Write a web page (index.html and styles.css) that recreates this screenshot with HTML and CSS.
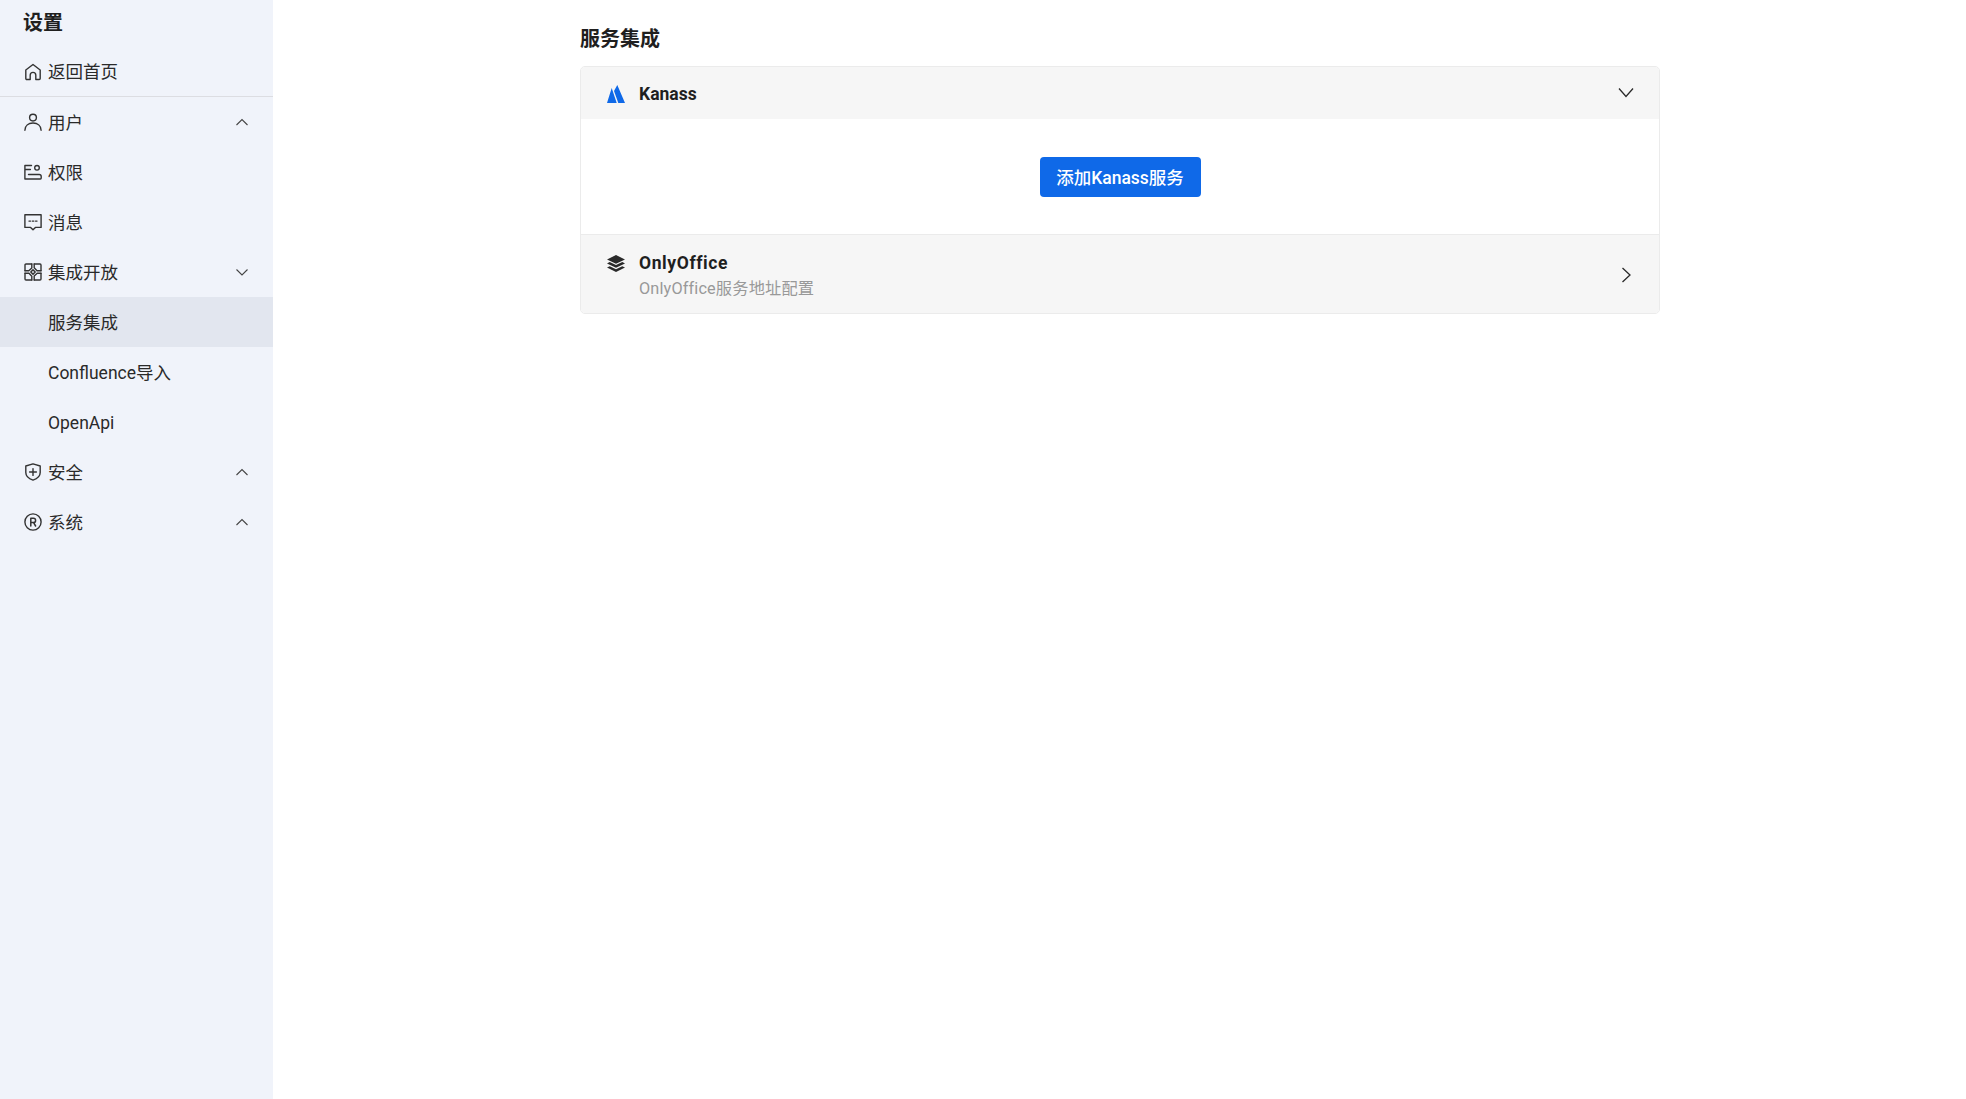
FILE: index.html
```html
<!DOCTYPE html>
<html lang="zh">
<head>
<meta charset="utf-8">
<title>服务集成</title>
<link rel="stylesheet" href="styles.css">
</head>
<body>
<div class="app">
  <aside class="sidebar">
    <div class="side-title">设置</div>
    <div class="home-wrap">
      <div class="row">
        <svg class="ico" viewBox="0 0 18 18"><path d="M1.800 7 9 1.500 16.200 7v8.500a1 1 0 0 1-1 1h-3.400v-4.300a2.800 2.800 0 0 0-5.600 0v4.300H2.800a1 1 0 0 1-1-1Z"/></svg>
        <span>返回首页</span>
      </div>
    </div>
    <div class="row">
      <svg class="ico" viewBox="0 0 18 18"><circle cx="9" cy="4.600" r="3.400"/><path d="M.9 17.200c0-4.500 3.500-7.200 8.100-7.200s8.100 2.700 8.100 7.200"/></svg>
      <span class="grow">用户</span>
      <svg class="chev" viewBox="0 0 12 12"><path d="M.5 9 6 3.500 11.500 9"/></svg>
    </div>
    <div class="row">
      <svg class="ico" viewBox="0 0 18 18"><path d="M7.500 2.500H.9v13.500h15.400a1 1 0 0 0 .9-1v-1.500a2 2 0 0 0-2-2H4.500M.9 6.500h5.500"/><circle cx="13" cy="4.800" r="2.300"/></svg>
      <span>权限</span>
    </div>
    <div class="row">
      <svg class="ico" viewBox="0 0 18 18"><path d="M.9 1.800h16.200v12.600h-5.700L9 16.800l-2.400-2.400H.9Z"/><path class="dots" d="M5 8.100h1.500M8.300 8.100h1.500M11.500 8.100h1.500"/></svg>
      <span>消息</span>
    </div>
    <div class="row">
      <svg class="ico" viewBox="0 0 18 18"><path d="M7.800 1H2a1 1 0 0 0-1 1v5.800M10.200 1H16a1 1 0 0 1 1 1v5.800M7.800 17H2a1 1 0 0 1-1-1v-5.800M10.200 17H16a1 1 0 0 0 1-1v-5.800"/><path d="M1 7.800h3.800L7.800 5V1M10.200 1v3.800L13 7.800h4M17 10.200h-3.800L10.200 13v4M7.800 17v-3.800L5 10.200H1"/><path class="thick" d="M9 6.800 11.200 9 9 11.200 6.800 9Z"/></svg>
      <span class="grow">集成开放</span>
      <svg class="chev" viewBox="0 0 12 12"><path d="M.5 3.500 6 9l5.500-5.500"/></svg>
    </div>
    <div class="row active"><span class="sub">服务集成</span></div>
    <div class="row"><span class="sub">Confluence导入</span></div>
    <div class="row"><span class="sub">OpenApi</span></div>
    <div class="row">
      <svg class="ico" viewBox="0 0 18 18"><path d="M9 .9 16.200 3v6.500c0 3.600-3 6.200-7.200 7.600-4.200-1.400-7.200-4-7.200-7.600V3Z"/><path d="M9 5.600v6.800M5.600 9h6.800"/></svg>
      <span class="grow">安全</span>
      <svg class="chev" viewBox="0 0 12 12"><path d="M.5 9 6 3.500 11.500 9"/></svg>
    </div>
    <div class="row">
      <svg class="ico" viewBox="0 0 18 18"><circle cx="9" cy="9" r="8.100"/><path class="thick" d="M6.800 13V5.200h2.600a2.200 2.200 0 0 1 0 4.400H6.800M9.600 9.600 11.600 13"/></svg>
      <span class="grow">系统</span>
      <svg class="chev" viewBox="0 0 12 12"><path d="M.5 9 6 3.500 11.500 9"/></svg>
    </div>
  </aside>
  <main class="main">
    <div class="content">
      <h1 class="page-title">服务集成</h1>
      <section class="card">
        <div class="head head-k">
          <svg class="logo" viewBox="0 0 18 18"><path class="blue" d="M0 18 4.700 3 9.700 18ZM10.300 0 18 18H11.300L7 6Z"/></svg>
          <div class="grow text"><div class="name">Kanass</div></div>
          <svg class="arrow" viewBox="0 0 16 16"><path d="M1 3.500 8 11.500l7-8"/></svg>
        </div>
        <div class="body">
          <button class="btn">添加Kanass服务</button>
        </div>
        <div class="head head-o">
          <svg class="logo" viewBox="0 0 18 18"><path class="dark" d="M9 0 18 4.400 9 8.800 0 4.400ZM2.700 7 9 10l6.300-3L18 8.400 9 12.800 0 8.400ZM2.700 11.200 9 14.200l6.300-3L18 12.600 9 17 0 12.600Z"/></svg>
          <div class="grow text">
            <div class="name">OnlyOffice</div>
            <div class="desc">OnlyOffice服务地址配置</div>
          </div>
          <svg class="arrow" viewBox="0 0 16 16"><path d="M4.500 1 12 8l-7.500 7"/></svg>
        </div>
      </section>
    </div>
  </main>
</div>
</body>
</html>
```

FILE: styles.css
```css
* { box-sizing: border-box; }
html, body { margin: 0; height: 100%; }
body {
  font-family: Roboto, "Noto Sans CJK SC", sans-serif;
  color: #1f1f1f;
  background: #fff;
  overflow: hidden;
}
.app { display: flex; height: 100vh; }
.sidebar { width: 273px; flex: none; background: #f0f3fa; }
.side-title {
  height: 47px;
  padding: 8px 23px 0;
  font-size: 20px;
  line-height: 30px;
  font-weight: 700;
}
.home-wrap { border-bottom: 1px solid #dcdde2; }
.home-wrap .row { height: 49px; }
.row {
  display: flex;
  align-items: center;
  height: 50px;
  padding: 0 25px 0 23.500px;
  font-size: 17.500px;
  line-height: 24px;
  color: #2a2a2a;
}
.row > span { padding-top: 1px; }
.row.active { background: #e2e6ef; }
.grow { flex: 1; min-width: 0; }
.ico {
  width: 18px;
  height: 18px;
  margin-right: 6.500px;
  flex: none;
  fill: none;
  stroke: #333;
  stroke-width: 1.400;
  stroke-linejoin: round;
  stroke-linecap: round;
}
.ico .thick { stroke-width: 1.500; }
.ico .dots { stroke-width: 1.400; }
.chev {
  width: 12px;
  height: 12px;
  flex: none;
  fill: none;
  stroke: #444;
  stroke-width: 1.100;
}
.sub { padding-left: 24.500px; }
.main { flex: 1; min-width: 0; }
.content { width: 1080px; margin: 0 0 0 307px; }
.page-title {
  margin: 0;
  height: 66px;
  padding-top: 22px;
  font-size: 20px;
  line-height: 34px;
  font-weight: 700;
}
.card {
  border: 1px solid #ebebeb;
  border-radius: 5px;
  overflow: hidden;
  height: 248px;
}
.head {
  display: flex;
  align-items: center;
  background: #f6f6f6;
  padding: 0 25px 0 26px;
}
.head-k { height: 52px; }
.head-o { height: 80px; border-top: 1px solid #ebebeb; }
.text { padding-top: 2px; }
.logo { width: 18px; height: 18px; margin-right: 14px; flex: none; }
.head-k .logo { margin-top: 2px; }
.head-o .logo { align-self: flex-start; margin-top: 20px; }
.blue { fill: #0f69e8; }
.dark { fill: #2a2a2a; }
.name { font-size: 17.500px; font-weight: 700; line-height: 26px; }
.head-o .name { letter-spacing: .6px; }
.desc { font-size: 16.250px; line-height: 26px; color: #999; letter-spacing: .15px; }
.arrow {
  width: 16px;
  height: 16px;
  flex: none;
  fill: none;
  stroke: #2a2a2a;
  stroke-width: 1.300;
}
.body {
  height: 115px;
  display: flex;
  align-items: center;
  justify-content: center;
}
.btn {
  width: 161px;
  height: 40px;
  border: 0;
  border-radius: 4px;
  background: #0f69e8;
  color: #fff;
  font-family: inherit;
  font-size: 17.500px;
  font-weight: 500;
  padding: 0;
}
```
